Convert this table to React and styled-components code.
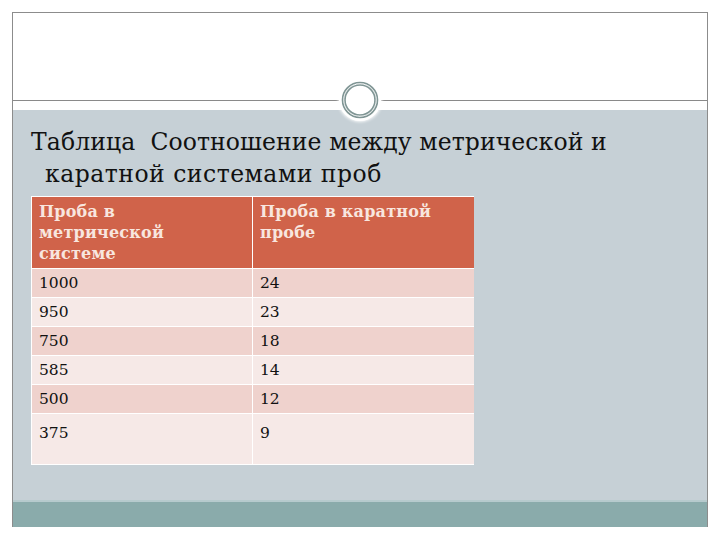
import React from "react";
import styled, { createGlobalStyle } from "styled-components";

const Global = createGlobalStyle`
  html, body { margin: 0; padding: 0; background: #ffffff; }
  body { width: 720px; height: 540px; overflow: hidden; font-family: "DejaVu Serif", "Liberation Serif", serif; }
`;

const Page = styled.div`
  width: 720px;
  height: 540px;
  padding: 12px 12px 13px 12px;
  box-sizing: border-box;
  display: flex;
`;

const Frame = styled.div`
  position: relative;
  flex: 1;
  display: flex;
  flex-direction: column;
  border: 1px solid #8c8c8c;
  border-bottom: none;
`;

const TopArea = styled.div`
  height: 87px;
  background: #ffffff;
  border-bottom: 1px solid #8a8a8a;
  flex: none;
`;

const Gap = styled.div`
  height: 9px;
  background: #ffffff;
  flex: none;
`;

const Content = styled.div`
  flex: 1;
  background: #c6d0d6;
  padding: 16px 0 0 18px;
  display: flex;
  flex-direction: column;
`;

const Footer = styled.div`
  height: 25px;
  flex: none;
  background: #8aabab;
  border-top: 2px solid #b6cacd;
`;

const Ornament = styled.div`
  position: absolute;
  left: 326px;
  top: 66px;
  width: 42px;
  height: 42px;
  border-radius: 50%;
  background: #ffffff;
  box-shadow: 0 0 3px 1px rgba(255, 255, 255, 0.9);
  display: flex;
  align-items: center;
  justify-content: center;
`;

const Title = styled.h1`
  margin: 0;
  font-family: "DejaVu Serif", "Liberation Serif", serif;
  font-weight: normal;
  font-size: 23.5px;
  line-height: 32px;
  color: #111111;
  letter-spacing: 0.1px;
`;

const TitleLine = styled.span`
  display: block;
  padding-left: ${(p) => (p.$indent ? "14px" : "0")};
  letter-spacing: ${(p) => (p.$indent ? "0.5px" : "0.1px")};
  white-space: pre;
`;

const Table = styled.div`
  margin-top: 6px;
  width: 443px;
  display: grid;
  grid-template-columns: 220px 221px;
  background: #ffffff;
  gap: 1px;
  padding: 1px 0 1px 1px;
  box-sizing: border-box;
`;

const HeadCell = styled.div`
  background: #d0634a;
  color: #f8e6df;
  font-family: "DejaVu Serif", serif;
  font-weight: bold;
  font-size: 16px;
  letter-spacing: 0.2px;
  line-height: 21px;
  padding: 4px 7px 3px 7px;
  height: 71px;
  box-sizing: border-box;
`;

const Cell = styled.div`
  background: ${(p) => (p.$odd ? "#efd2cd" : "#f6e9e7")};
  font-family: "DejaVu Serif", serif;
  font-size: 15.5px;
  color: #111111;
  padding: ${(p) => (p.$tall ? "10px 6px 0 7px" : "0 6px 0 7px")};
  height: ${(p) => p.$h}px;
  box-sizing: border-box;
  display: flex;
  align-items: ${(p) => (p.$tall ? "flex-start" : "center")};
`;

const rows = [
  ["1000", "24"],
  ["950", "23"],
  ["750", "18"],
  ["585", "14"],
  ["500", "12"],
  ["375", "9"],
];

function Ring() {
  return (
    <svg width="40" height="40" viewBox="0 0 40 40">
      <circle cx="20" cy="20" r="17.5" fill="none" stroke="#7f9594" strokeWidth="1.6" />
      <circle cx="20" cy="20" r="15" fill="none" stroke="#7f9594" strokeWidth="1.6" />
      <circle cx="20" cy="20" r="16.25" fill="none" stroke="#c9d3d3" strokeWidth="0.9" strokeDasharray="1.2 1.2" />
    </svg>
  );
}

export default function App() {
  return (
    <>
      <Global />
      <Page>
        <Frame>
          <TopArea />
          <Gap />
          <Content>
            <Title>
              <TitleLine>Таблица  Соотношение между метрической и</TitleLine>
              <TitleLine $indent>каратной системами проб</TitleLine>
            </Title>
            <Table>
              <HeadCell>Проба в<br />метрической<br />системе</HeadCell>
              <HeadCell>Проба в каратной<br />пробе</HeadCell>
              {rows.map((r, i) => {
                const last = i === rows.length - 1;
                const h = last ? 50 : 28;
                return (
                  <React.Fragment key={r[0]}>
                    <Cell $odd={i % 2 === 0} $h={h} $tall={last}>{r[0]}</Cell>
                    <Cell $odd={i % 2 === 0} $h={h} $tall={last}>{r[1]}</Cell>
                  </React.Fragment>
                );
              })}
            </Table>
          </Content>
          <Footer />
          <Ornament>
            <Ring />
          </Ornament>
        </Frame>
      </Page>
    </>
  );
}
